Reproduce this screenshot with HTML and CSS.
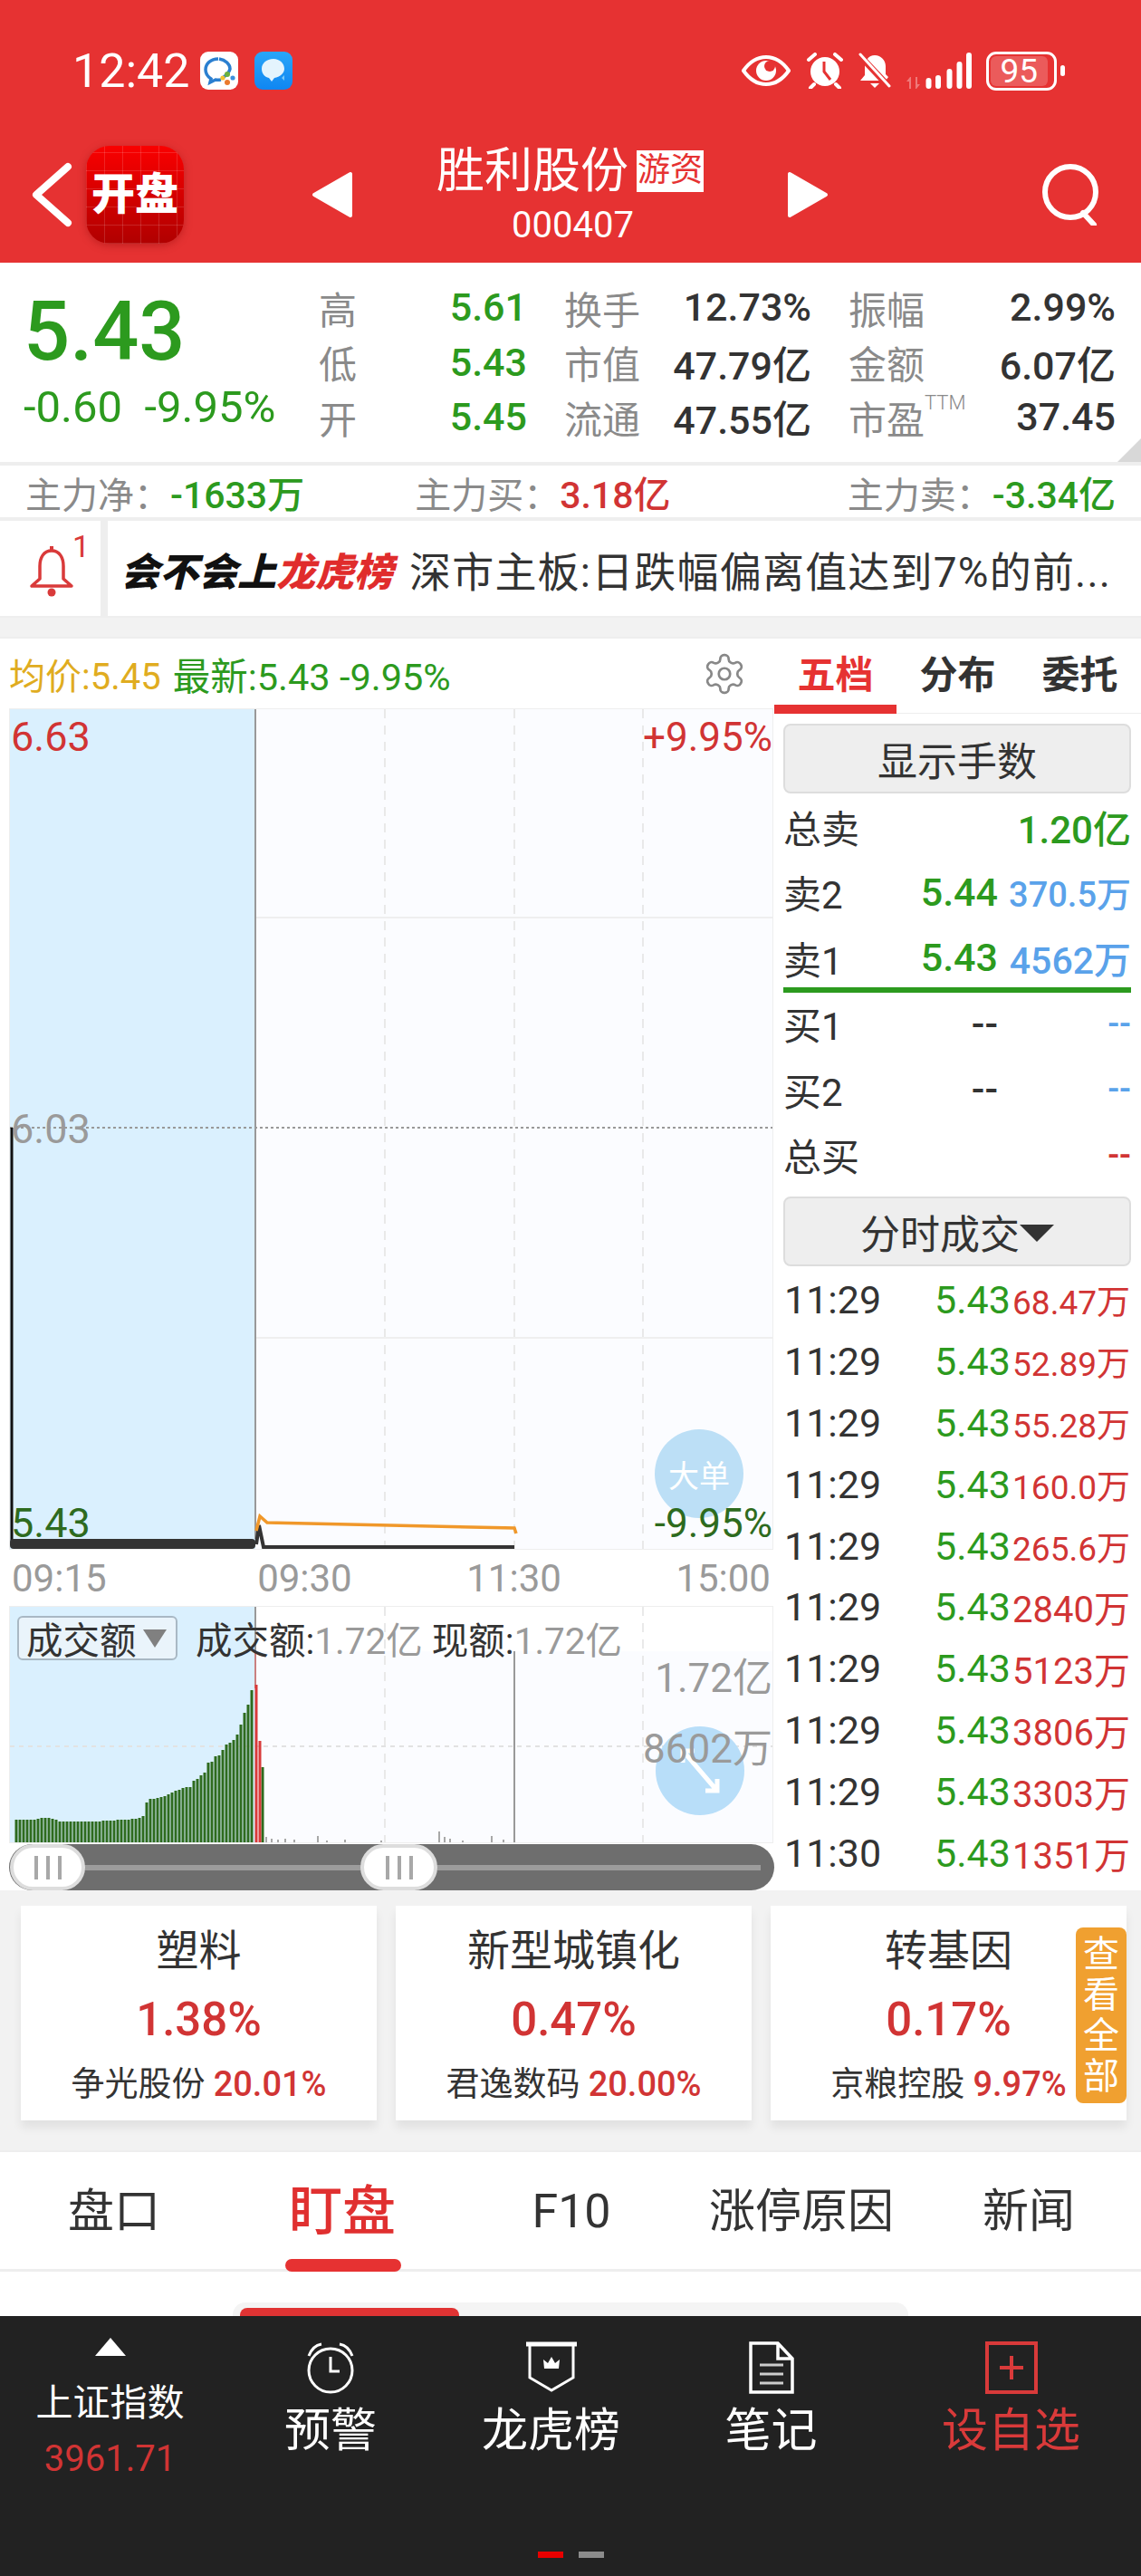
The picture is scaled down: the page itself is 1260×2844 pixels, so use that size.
FILE: index.html
```html
<!DOCTYPE html>
<html lang="zh-CN">
<head>
    <meta charset="UTF-8" />
    <title>胜利股份</title>
    <link rel="stylesheet" href="styles.css">
</head>
<body>

    <!-- 顶部红色栏 -->
    <header class="hdr">
        <div class="status">
            <span class="clock">12:42</span>
            <svg class="app-mini" viewBox="0 0 42 42">
                <rect width="42" height="42" rx="9" fill="#fff"/>
                <path d="M20 8c-8 0-14 5-14 12 0 5 3 8 6 10l-1 4 6-3c2 .4 4 .3 6 0" fill="none" stroke="#2b7fd0" stroke-width="3.500"/>
                <path d="M26 28c3-2 6-5 7-9 0-5-5-10-12-11" fill="none" stroke="#2b7fd0" stroke-width="3.500"/>
                <circle cx="30" cy="25" r="3" fill="#6bb13c"/><circle cx="36" cy="29" r="2.600" fill="#3d8fdc"/><circle cx="30" cy="34" r="3" fill="#ea7a2c"/><circle cx="25" cy="29" r="2.600" fill="#f2c230"/>
            </svg>
            <svg class="app-mini app-gap" viewBox="0 0 42 42">
                <defs><linearGradient id="msgBg" x1="0" y1="0" x2="0" y2="1"><stop offset="0" stop-color="#2aa6f8"/><stop offset="1" stop-color="#0f86f2"/></linearGradient></defs>
                <rect width="42" height="42" rx="9" fill="url(#msgBg)"/>
                <path d="M21 8c-8 0-13 5-13 11 0 5 3 9 8 10l3 4 3-4c6-1 11-5 11-10 0-6-5-11-12-11z" fill="#e4f4fd"/>
                <path d="M30 29l3 3 0-6z" fill="#7ccbf8"/>
            </svg>
            <div class="sys">
                <svg class="ic-eye" viewBox="0 0 54 36">
                    <path d="M2 18C9 8 17 3 27 3s18 5 25 15c-7 10-15 15-25 15S9 28 2 18z" fill="none" stroke="#fff" stroke-width="4"/>
                    <circle cx="27" cy="18" r="11" fill="#fff"/><circle cx="31" cy="13" r="6" fill="#e63232"/>
                </svg>
                <svg class="ic-alarm" viewBox="0 0 42 40">
                    <circle cx="21" cy="21" r="16" fill="#fff"/>
                    <path d="M3 8l7-6M39 8l-7-6M9 35l-4 4M33 35l4 4" stroke="#fff" stroke-width="4" stroke-linecap="round"/>
                    <path d="M20 10v11l7 9" fill="none" stroke="#e63232" stroke-width="3"/>
                </svg>
                <svg class="ic-bell" viewBox="0 0 36 40">
                    <path d="M18 3c-7 0-11 6-11 13v9l-5 6h28l3-4-3-3v-9c0-6-5-12-12-12z" fill="#fff"/>
                    <path d="M13 34h10l-5 5z" fill="#fff"/>
                    <path d="M1 3l32 34" stroke="#e63232" stroke-width="7"/>
                    <path d="M2 2l32 35" stroke="#fff" stroke-width="3" stroke-linecap="round"/>
                </svg>
                <svg class="ic-signal" viewBox="0 0 73 40">
                    <path d="M5 27l-4 5h3v8h2V27zM12 40l4-5h-3v-8h-2v13z" fill="#fff" opacity=".35"/>
                    <path d="M25.500 31v6M36 28v9M48.500 21v16M59.500 13v24M70 3v34" stroke="#fff" stroke-width="6" stroke-linecap="round"/>
                </svg>
                <div class="batt"><span class="batt-fill">95</span></div>
                <div class="batt-nub"></div>
            </div>
        </div>
        <nav class="nav">
            <svg class="back" viewBox="0 0 45 72"><path d="M40 5L5 36l35 31" fill="none" stroke="#fff" stroke-width="8" stroke-linecap="round" stroke-linejoin="round"/></svg>
            <div class="logo"><span>开盘</span></div>
            <svg class="arr arr-l" viewBox="0 0 48 54"><path d="M44 4v46L4 27z" fill="#fff" stroke="#fff" stroke-width="4" stroke-linejoin="round"/></svg>
            <div class="stock">
                <div class="stock-name">胜利股份<span class="stock-tag">游资</span></div>
                <div class="stock-code">000407</div>
            </div>
            <svg class="arr" viewBox="0 0 48 54"><path d="M4 4v46l40-23z" fill="#fff" stroke="#fff" stroke-width="4" stroke-linejoin="round"/></svg>
            <svg class="search" viewBox="0 0 64 68"><circle cx="32" cy="31" r="28" fill="none" stroke="#fff" stroke-width="6"/><path d="M46 54l12 13" stroke="#fff" stroke-width="6" stroke-linecap="round"/></svg>
        </nav>
    </header>

    <!-- 报价 -->
    <section class="quote">
        <div class="quote-left">
            <div class="price">5.43</div>
            <div class="change">-0.60&nbsp; -9.95%</div>
        </div>
        <div class="qt">
            <div class="qc"><span class="ql">高</span><span class="qv green">5.61</span></div>
            <div class="qc"><span class="ql">换手</span><span class="qv">12.73%</span></div>
            <div class="qc"><span class="ql">振幅</span><span class="qv">2.99%</span></div>
            <div class="qc"><span class="ql">低</span><span class="qv green">5.43</span></div>
            <div class="qc"><span class="ql">市值</span><span class="qv">47.79亿</span></div>
            <div class="qc"><span class="ql">金额</span><span class="qv">6.07亿</span></div>
            <div class="qc"><span class="ql">开</span><span class="qv green">5.45</span></div>
            <div class="qc"><span class="ql">流通</span><span class="qv">47.55亿</span></div>
            <div class="qc"><span class="ql">市盈<sup class="ttm">TTM</sup></span><span class="qv">37.45</span></div>
        </div>
        <div class="corner"></div>
    </section>

    <div class="flow">
        <span class="fl">主力净：<b class="green">-1633万</b></span>
        <span class="fl fl-mid">主力买：<b class="red">3.18亿</b></span>
        <span class="fl fl-end">主力卖：<b class="green">-3.34亿</b></span>
    </div>

    <div class="notice">
        <div class="notice-bell">
            <svg class="bell-red" viewBox="0 0 54 58">
                <path d="M27 7c-9 0-13 8-13 17v14l-9 8h44l-9-8V24c0-9-4-17-13-17z" fill="none" stroke="#d93a3a" stroke-width="3.500" stroke-linejoin="round"/>
                <path d="M27 2v6" stroke="#d93a3a" stroke-width="4"/><circle cx="27" cy="53" r="4.500" fill="#d93a3a"/>
            </svg>
            <span class="bell-num">1</span>
        </div>
        <div class="notice-brand">会不会上<em>龙虎榜</em></div>
        <div class="notice-text">深市主板:日跌幅偏离值达到7%的前...</div>
    </div>

    <!-- 分时 + 五档 -->
    <main class="main">
        <div class="left">
            <div class="legend">
                <span class="yellow">均价:5.45</span>
                <span class="green">最新:5.43 -9.95%</span>
                <svg class="gear" viewBox="0 0 24 24" fill="none" stroke="#888" stroke-width="1.300"><path d="M12.220 2h-.44a2 2 0 0 0-2 2v.18a2 2 0 0 1-1 1.730l-.43.25a2 2 0 0 1-2 0l-.15-.08a2 2 0 0 0-2.730.73l-.22.38a2 2 0 0 0 .73 2.730l.15.1a2 2 0 0 1 1 1.720v.51a2 2 0 0 1-1 1.740l-.15.09a2 2 0 0 0-.73 2.730l.22.38a2 2 0 0 0 2.730.73l.15-.08a2 2 0 0 1 2 0l.43.25a2 2 0 0 1 1 1.730V20a2 2 0 0 0 2 2h.44a2 2 0 0 0 2-2v-.18a2 2 0 0 1 1-1.730l.43-.25a2 2 0 0 1 2 0l.15.08a2 2 0 0 0 2.730-.73l.22-.39a2 2 0 0 0-.73-2.730l-.15-.08a2 2 0 0 1-1-1.740v-.5a2 2 0 0 1 1-1.740l.15-.09a2 2 0 0 0 .73-2.730l-.22-.38a2 2 0 0 0-2.730-.73l-.15.08a2 2 0 0 1-2 0l-.43-.25a2 2 0 0 1-1-1.730V4a2 2 0 0 0-2-2z"/><circle cx="12" cy="12" r="3"/></svg>
            </div>

            <div class="chart">
                <svg class="layer" viewBox="0 0 842 927">
                    <path d="M414 0V927M557 0V927M699 0V927" stroke="#e9e9e9" stroke-width="2" stroke-dasharray="10 8"/>
                    <path d="M271 230H842M271 694H842" stroke="#efefef" stroke-width="2"/>
                    <path d="M0 462H842" stroke="#999" stroke-width="2" stroke-dasharray="3 3"/>
                    <path d="M271 0V916" stroke="#999" stroke-width="2"/>
                    <path d="M2 462V920" stroke="#111" stroke-width="3"/>
                    <rect x="0" y="916" width="271" height="11" rx="4" fill="#333"/>
                    <path d="M272 922L275 901L280 925H557" fill="none" stroke="#333" stroke-width="4"/>
                    <path d="M272 907L276 891L284 898L557 904L559 910" fill="none" stroke="#f0982a" stroke-width="3.500"/>
                </svg>
                <div class="float-btn float-big">大单</div>
                <span class="lab lab-l lab-top red">6.63</span>
                <span class="lab lab-l lab-mid gray">6.03</span>
                <span class="lab lab-l lab-low dkgreen">5.43</span>
                <span class="lab lab-r lab-top red">+9.95%</span>
                <span class="lab lab-r lab-low dkgreen">-9.95%</span>
            </div>

            <div class="axis">
                <span class="axis-first">09:15</span><span>09:30</span><span>11:30</span><span>15:00</span>
            </div>

            <div class="vol">
                <svg class="layer" viewBox="0 0 842 260">
                    <path d="M414 0V260M699 0V260" stroke="#e9e9e9" stroke-width="2" stroke-dasharray="10 8"/>
                    <path d="M0 154H842" stroke="#e2e2e2" stroke-width="2" stroke-dasharray="5 5"/>
                    <path d="M271 0V49" stroke="#999" stroke-width="2"/>
                    <path d="M271 49V90" stroke="#c98080" stroke-width="2"/>
                    <path d="M557 49V260" stroke="#999" stroke-width="2"/>
                    <path fill="none" stroke="#2e6b1e" stroke-width="3" d="M7 260V235M11 260V235M15 260V235M19 260V235M23 260V235M27 260V235M31 260V234M35 260V233M39 260V233M43 260V233M47 260V234M51 260V235M55 260V237M59 260V237M63 260V237M67 260V237M71 260V237M75 260V237M79 260V237M83 260V237M87 260V237M91 260V237M95 260V237M99 260V237M103 260V236M107 260V236M111 260V236M115 260V236M119 260V235M123 260V235M127 260V235M131 260V235M135 260V234M139 260V234M143 260V233M147 260V231M151 260V216M155 260V212M159 260V212M163 260V211M167 260V210M171 260V209M175 260V207M179 260V205M183 260V203M187 260V202M191 260V200M195 260V199M199 260V199M203 260V192M207 260V190M211 260V186M215 260V183M219 260V172M223 260V171M227 260V165M231 260V164M235 260V158M239 260V152M243 260V150M247 260V147M251 260V141M255 260V130M259 260V117M263 260V108M267 260V92M279 260V177"/>
                    <path fill="none" stroke="#d93a3a" stroke-width="3" d="M272 260V86M276 260V148"/>
                    <path fill="none" stroke="#a8a8a8" stroke-width="2" d="M283 260V254M289 260V256M296 260V257M304 260V256M314 260V257M340 260V253M350 260V258M370 260V257M410 260V258M474 260V248M480 260V254M486 260V256M500 260V258M532 260V253M545 260V257"/>
                </svg>
                <div class="vol-head">
                    <div class="vol-pill">成交额<i class="tri"></i></div>
                    <div class="vol-info">成交额:<span class="gray">1.72亿</span> 现额:<span class="gray">1.72亿</span></div>
                </div>
                <div class="float-btn float-expand">
                    <svg class="expand" viewBox="0 0 44 50"><path d="M4 4l36 42M3 16V3h13M41 34v13H28" fill="none" stroke="#fff" stroke-width="5"/></svg>
                </div>
                <span class="lab lab-r lab-v1 gray">1.72亿</span>
                <span class="lab lab-r lab-v2 gray">8602万</span>
            </div>

            <div class="slider">
                <div class="slider-track"></div>
                <div class="knob knob-a"><i></i><i></i><i></i></div>
                <div class="knob knob-b"><i></i><i></i><i></i></div>
            </div>
        </div>

        <aside class="right">
            <div class="rtabs">
                <span class="rtab on">五档</span><span class="rtab">分布</span><span class="rtab">委托</span>
            </div>
            <div class="rbtn">显示手数</div>
            <div class="lv"><span>总卖</span><span></span><span class="green lv-total">1.20亿</span></div>
            <div class="lv"><span>卖2</span><span class="green lv-p">5.44</span><span class="blue lv-n">370.5万</span></div>
            <div class="lv lv-sep"><span>卖1</span><span class="green lv-p">5.43</span><span class="blue lv-n lv-fit">4562万</span></div>
            <div class="lv"><span>买1</span><span class="lv-p">--</span><span class="blue lv-n">--</span></div>
            <div class="lv"><span>买2</span><span class="lv-p">--</span><span class="blue lv-n">--</span></div>
            <div class="lv"><span>总买</span><span></span><span class="red lv-n">--</span></div>
            <div class="rbtn rbtn-2">分时成交<i class="tri-dark"></i></div>
            <div class="ticks">
                <div class="tick"><span>11:29</span><span class="green t-p">5.43</span><span class="red t-v">68.47万</span></div>
                <div class="tick"><span>11:29</span><span class="green t-p">5.43</span><span class="red t-v">52.89万</span></div>
                <div class="tick"><span>11:29</span><span class="green t-p">5.43</span><span class="red t-v">55.28万</span></div>
                <div class="tick"><span>11:29</span><span class="green t-p">5.43</span><span class="red t-v">160.0万</span></div>
                <div class="tick"><span>11:29</span><span class="green t-p">5.43</span><span class="red t-v">265.6万</span></div>
                <div class="tick"><span>11:29</span><span class="green t-p">5.43</span><span class="red t-v t-fit">2840万</span></div>
                <div class="tick"><span>11:29</span><span class="green t-p">5.43</span><span class="red t-v t-fit">5123万</span></div>
                <div class="tick"><span>11:29</span><span class="green t-p">5.43</span><span class="red t-v t-fit">3806万</span></div>
                <div class="tick"><span>11:29</span><span class="green t-p">5.43</span><span class="red t-v t-fit">3303万</span></div>
                <div class="tick"><span>11:30</span><span class="green t-p">5.43</span><span class="red t-v t-fit">1351万</span></div>
            </div>
        </aside>
    </main>

    <!-- 板块 -->
    <section class="cards">
        <div class="card">
            <div class="card-title">塑料</div>
            <div class="card-pct">1.38%</div>
            <div class="card-sub">争光股份 <b>20.01%</b></div>
        </div>
        <div class="card">
            <div class="card-title">新型城镇化</div>
            <div class="card-pct">0.47%</div>
            <div class="card-sub">君逸数码 <b>20.00%</b></div>
        </div>
        <div class="card">
            <div class="card-title">转基因</div>
            <div class="card-pct">0.17%</div>
            <div class="card-sub">京粮控股 <b>9.97%</b></div>
            <div class="see-all">查看全部</div>
        </div>
    </section>

    <div class="tabs">
        <span class="tab">盘口</span>
        <span class="tab on">盯盘</span>
        <span class="tab">F10</span>
        <span class="tab">涨停原因</span>
        <span class="tab">新闻</span>
    </div>

    <div class="strip"><div class="strip-pill"><div class="strip-fill"></div></div></div>

    <footer class="bar">
        <div class="bar-row">
            <div class="bi bi-index">
                <i class="tri-up"></i>
                <span class="idx-name">上证指数</span>
                <span class="idx-val">3961.71</span>
            </div>
            <div class="bi">
                <svg class="bi-ic" viewBox="0 0 54 58" fill="none" stroke="#fff" stroke-width="3"><circle cx="27" cy="32" r="24"/><path d="M27 17v16h10"/><path d="M3 16C6 8 11 4 17 3M51 16C48 8 43 4 37 3"/></svg>
                <span>预警</span>
            </div>
            <div class="bi">
                <svg class="bi-ic" viewBox="0 0 56 58" fill="none" stroke="#fff" stroke-width="3"><path d="M0 3h56" stroke-width="5"/><path d="M4 3v37l24 14 24-14V3"/><path d="M20 30l-1-10 5 4 4-7 4 7 5-4-1 10z" fill="#fff" stroke="none"/></svg>
                <span>龙虎榜</span>
            </div>
            <div class="bi">
                <svg class="bi-ic" viewBox="0 0 50 58" fill="none" stroke="#fff" stroke-width="3.500"><path d="M2 2h30l16 17v37H2zM32 2v17h16"/><path d="M12 26h26M12 36h26M12 46h26" stroke="#ccc" stroke-width="3"/></svg>
                <span>笔记</span>
            </div>
            <div class="bi bi-add">
                <svg class="bi-ic" viewBox="0 0 58 58" fill="none" stroke="#d93a3a"><path d="M2 2h54v54H2z" stroke-width="4"/><path d="M29 16v26M16 29h26" stroke-width="4"/></svg>
                <span>设自选</span>
            </div>
        </div>
        <div class="dots"><i class="dot dot-on"></i><i class="dot"></i></div>
    </footer>

</body>
</html>
```

FILE: styles.css
```css
* {
    margin: 0;
    padding: 0;
    box-sizing: border-box;
}

html, body {
    width: 1260px;
    height: 2844px;
    overflow: hidden;
}

body {
    background: #f2f2f2;
    color: #333;
    font-family: Roboto, "Noto Sans CJK SC", sans-serif;
}

i, em, b {
    font-style: normal;
    font-weight: inherit;
}

.green { color: #2c9a1e; }
.red { color: #d13434; }
.blue { color: #5aa2ea; }
.gray { color: #9a9a9a; }
.yellow { color: #e0ac20; }
.dkgreen { color: #2e6b1e; }

/* 顶部 */
.hdr {
    height: 290px;
    background: #e63232;
    color: #fff;
}

.status {
    height: 156px;
    display: flex;
    align-items: center;
    padding-left: 80px;
}

.clock {
    font-size: 52px;
    width: 141px;
}

.app-mini {
    width: 42px;
    height: 42px;
}

.app-gap { margin-left: 18px; }

.sys {
    margin-left: auto;
    margin-right: 84px;
    display: flex;
    align-items: center;
}

.ic-eye { width: 54px; height: 36px; }
.ic-alarm { width: 42px; height: 40px; margin-left: 17px; }
.ic-bell { width: 36px; height: 40px; margin-left: 16px; }
.ic-signal { width: 73px; height: 40px; margin-left: 16px; }

.batt {
    width: 78px;
    height: 43px;
    margin-left: 16px;
    border: 3px solid #fff;
    border-radius: 11px;
    padding: 2px;
}

.batt-fill {
    display: block;
    height: 100%;
    width: 92%;
    background: rgba(255, 255, 255, 0.2);
    border-radius: 6px;
    font-size: 37px;
    line-height: 33px;
    text-align: center;
}

.batt-nub {
    width: 5px;
    height: 12px;
    margin-left: 4px;
    background: #fff;
    border-radius: 3px;
}

.nav {
    height: 118px;
    display: flex;
    align-items: center;
    padding-left: 35px;
}

.back { width: 45px; height: 72px; }

.logo {
    width: 108px;
    height: 108px;
    margin-left: 15px;
    border-radius: 26px;
    background:
        repeating-linear-gradient(90deg, rgba(255,255,255,.14) 0 1px, transparent 1px 20px),
        repeating-linear-gradient(0deg, rgba(255,255,255,.14) 0 1px, transparent 1px 20px),
        linear-gradient(#fa0000, #b00000);
    box-shadow: 0 2px 10px rgba(120, 0, 0, 0.35);
    display: flex;
    align-items: center;
    justify-content: center;
}

.logo span {
    font-size: 48px;
    line-height: 60px;
    font-weight: 900;
    white-space: nowrap;
}

.arr { width: 48px; height: 54px; }
.arr-l { margin-left: 140px; }

.stock {
    width: 477px;
    text-align: center;
}

.stock-name {
    display: flex;
    align-items: center;
    justify-content: center;
    font-size: 53px;
    line-height: 58px;
}

.stock-tag {
    margin-left: 9px;
    width: 74px;
    height: 46px;
    background: #fff;
    color: #e63232;
    font-size: 36px;
    line-height: 44px;
    text-align: center;
}

.stock-code {
    font-size: 40px;
    line-height: 42px;
    margin-top: 10px;
    padding-left: 6px;
}

.search {
    width: 64px;
    height: 68px;
    margin-left: 234px;
}

/* 报价 */
.quote {
    position: relative;
    height: 220px;
    background: #fff;
    display: flex;
}

.quote-left {
    width: 352px;
    padding-left: 26px;
}

.price {
    font-size: 90px;
    font-weight: 500;
    line-height: 100px;
    margin-top: 27px;
    color: #2c9a1e;
}

.change {
    font-size: 49px;
    line-height: 50px;
    margin-top: 8px;
    color: #2c9a1e;
    white-space: nowrap;
}

.qt {
    display: grid;
    grid-template-columns: 230px 273px 295px;
    grid-auto-rows: 60.500px;
    column-gap: 41px;
    padding-top: 19px;
}

.qc {
    display: flex;
    justify-content: space-between;
    align-items: center;
    font-size: 43px;
}

.ql {
    color: #8a8a8a;
    position: relative;
    font-size: 42px;
}

.qv {
    font-weight: 500;
    white-space: nowrap;
}

.ttm {
    font-size: 22px;
    font-weight: 300;
    position: absolute;
    top: 2px;
    left: 84px;
}

.corner {
    position: absolute;
    right: 0;
    bottom: 0;
    width: 26px;
    height: 26px;
    background: #d8d8d8;
    clip-path: polygon(100% 0, 100% 100%, 0 100%);
}

/* 主力 */
.flow {
    height: 65px;
    border-top: 4px solid #eee;
    border-bottom: 4px solid #eee;
    background: #fff;
    display: flex;
    align-items: center;
    padding: 0 28px;
    font-size: 40px;
    color: #8a8a8a;
}

.fl { white-space: nowrap; }

.fl b {
    font-size: 41px;
    font-weight: 500;
}

.fl-mid { margin-left: 122px; }
.fl-end { margin-left: auto; }

.notice {
    height: 107px;
    background: #fff;
    display: flex;
    align-items: center;
    border-bottom: 2px solid #eee;
}

.notice-bell {
    position: relative;
    width: 119px;
    height: 105px;
    border-right: 8px solid #eee;
    padding: 26px 0 0 30px;
}

.bell-red {
    display: block;
    width: 54px;
    height: 58px;
}

.bell-num {
    position: absolute;
    left: 80px;
    top: 8px;
    font-size: 34px;
    line-height: 40px;
    color: #d93a3a;
}

.notice-brand {
    margin-left: 14px;
    width: 319px;
    font-size: 43px;
    font-weight: 900;
    font-style: italic;
    color: #111;
    white-space: nowrap;
}

.notice-brand em {
    color: #e02c2c;
    font-style: italic;
}

.notice-text {
    font-size: 46px;
    letter-spacing: 1.200px;
    white-space: nowrap;
}

/* 分时 + 五档 */
.main {
    margin-top: 21px;
    height: 1384px;
    background: #fff;
    display: flex;
    border-top: 2px solid #eee;
}

.left {
    width: 855px;
    flex: none;
}

.legend {
    height: 78px;
    display: flex;
    align-items: center;
    padding-left: 10px;
    font-size: 40px;
    white-space: nowrap;
}

.legend .green {
    margin-left: 13px;
    font-size: 41.500px;
}

.gear {
    width: 50px;
    height: 50px;
    margin-left: auto;
    margin-right: 30px;
}

.chart, .vol {
    position: relative;
    width: 842px;
    margin-left: 11px;
    background: linear-gradient(90deg, #daf0fe 271px, #fbfcff 271px);
    box-shadow: 0 0 0 1px #eee;
}

.chart { height: 927px; }

.vol {
    height: 260px;
    background:
        linear-gradient(90deg, transparent 271px, #fff 271px) top / 100% 49px no-repeat,
        linear-gradient(90deg, #daf0fe 271px, #fbfcff 271px);
}

.layer {
    position: absolute;
    left: 0;
    top: 0;
    width: 100%;
    height: 100%;
}

.lab {
    position: absolute;
    font-size: 45px;
    line-height: 50px;
    white-space: nowrap;
}

.lab-l { left: 1px; }

.lab-r {
    right: 0;
    font-size: 44px;
}

.lab-top { top: 6px; }
.lab-mid { top: 439px; }
.lab-low { top: 874px; }
.lab-v1 { top: 54px; }
.lab-v2 { top: 132px; }

.float-btn {
    position: absolute;
    width: 98px;
    height: 98px;
    border-radius: 50%;
    background: #bcdff6;
    color: #fff;
    display: flex;
    align-items: center;
    justify-content: center;
}

.float-big {
    left: 712px;
    top: 795px;
    font-size: 34px;
}

.float-expand {
    left: 713px;
    top: 132px;
    background: #b8def9;
}

.expand { width: 44px; height: 50px; }

.axis {
    height: 64px;
    display: flex;
    justify-content: space-between;
    align-items: center;
    margin-left: 11px;
    width: 842px;
    padding: 0 2px 0 2px;
    font-size: 42px;
    color: #9a9a9a;
}

.axis-first { margin-right: 40px; }

.vol-head {
    position: absolute;
    left: 8px;
    top: 5px;
    display: flex;
    align-items: center;
    font-size: 40.500px;
    white-space: nowrap;
}

.vol-pill {
    width: 177px;
    height: 49px;
    display: flex;
    align-items: center;
    padding-left: 8px;
    border: 2px solid #a9b8c4;
    border-radius: 6px;
    background: #eaf4fb;
}

.tri {
    margin-left: 7px;
    border-left: 13px solid transparent;
    border-right: 13px solid transparent;
    border-top: 20px solid #808080;
}

.vol-info { margin-left: 20px; }

.slider {
    position: relative;
    margin: 2px 0 0 10px;
    width: 845px;
    height: 51px;
    background: #6e6e6e;
    border-radius: 26px;
}

.slider-track {
    position: absolute;
    left: 50px;
    right: 15px;
    top: 23px;
    height: 6px;
    background: #9c9c9c;
}

.knob {
    position: absolute;
    top: 0;
    height: 51px;
    background: #fff;
    border: 4px solid #ddd;
    border-radius: 26px;
    display: flex;
    align-items: center;
    justify-content: center;
    gap: 9px;
}

.knob i {
    width: 4px;
    height: 26px;
    background: #a8a8a8;
}

.knob-a { left: 1px; width: 83px; }
.knob-b { left: 388px; width: 85px; }

/* 右栏 */
.right {
    width: 405px;
    flex: none;
    height: 1382px;
}

.rtabs {
    height: 83px;
    display: flex;
    border-bottom: 1px solid #eee;
}

.rtab {
    width: 135px;
    text-align: center;
    font-size: 42px;
    font-weight: 700;
    line-height: 82px;
}

.rtab.on {
    color: #e63232;
    border-bottom: 10px solid #e63232;
    height: 83px;
}

.rbtn {
    width: 384px;
    height: 77px;
    margin: 11px 0 0 10px;
    background: #eee;
    border: 2px solid #ddd;
    border-radius: 8px;
    display: flex;
    align-items: center;
    justify-content: center;
    font-size: 44px;
}

.rbtn-2 { margin-top: 10px; }

.tri-dark {
    margin-top: 4px;
    border-left: 19px solid transparent;
    border-right: 19px solid transparent;
    border-top: 19px solid #333;
}

.lv {
    position: relative;
    display: grid;
    grid-template-columns: 1fr auto 147px;
    align-items: center;
    height: 72.500px;
    padding: 0 11px 0 10px;
    font-size: 42px;
}

.lv-p {
    font-size: 43px;
    font-weight: 500;
    text-align: right;
}

.lv-n {
    font-size: 38px;
    font-weight: 500;
    text-align: right;
}

.lv-fit { font-size: 41px; }

.lv-total {
    font-weight: 500;
    text-align: right;
}

.lv-sep::after {
    content: "";
    position: absolute;
    left: 10px;
    right: 11px;
    bottom: -2px;
    height: 6px;
    background: #2c9a1e;
}

.ticks { margin-top: 3px; }

.tick {
    display: grid;
    grid-template-columns: 166px 82px 134px;
    align-items: center;
    height: 67.900px;
    padding-left: 11px;
    font-size: 43px;
}

.t-v {
    font-size: 37px;
    text-align: right;
    white-space: nowrap;
}

.t-fit { font-size: 40px; }

/* 板块 */
.cards {
    height: 287px;
    padding: 17px 17px 0 23px;
    display: grid;
    grid-template-columns: repeat(3, 393px);
    column-gap: 21px;
    align-items: start;
}

.card {
    position: relative;
    height: 237px;
    background: #fff;
    box-shadow: 0 8px 10px rgba(0, 0, 0, 0.07);
    padding-top: 23px;
    text-align: center;
}

.card-title {
    font-size: 47px;
    line-height: 54px;
}

.card-pct {
    margin-top: 19px;
    font-size: 51px;
    line-height: 60px;
    font-weight: 500;
    color: #d13434;
}

.card-sub {
    margin-top: 19px;
    font-size: 37px;
    line-height: 44px;
    white-space: nowrap;
}

.card-sub b {
    font-size: 38px;
    color: #d13434;
    font-weight: 500;
}

.see-all {
    position: absolute;
    right: 0;
    top: 24px;
    width: 56px;
    height: 194px;
    padding: 0 8px;
    background: #f0a030;
    border-radius: 8px;
    color: #fff;
    font-size: 40px;
    line-height: 45px;
    display: flex;
    align-items: center;
    text-align: center;
}

.tabs {
    position: relative;
    height: 134px;
    background: #fff;
    border-top: 2px solid #eee;
    border-bottom: 3px solid #eee;
    display: grid;
    grid-template-columns: 252px 252px 254px 254px 1fr;
}

.tab {
    position: relative;
    text-align: center;
    font-size: 51px;
    line-height: 132px;
}

.tab:nth-child(3) { font-size: 52px; }

.tab.on {
    color: #e03030;
    font-size: 59px;
    font-weight: 500;
}

.tab.on::after {
    content: "";
    position: absolute;
    left: 63px;
    bottom: 0;
    width: 128px;
    height: 14px;
    background: #e63232;
    border-radius: 8px;
}

.strip {
    height: 49px;
    padding-top: 34px;
    background: #fff;
}

.strip-pill {
    margin-left: 257px;
    width: 746px;
    height: 15px;
    padding: 6px 0 0 8px;
    background: #f4f4f4;
    border-radius: 14px 14px 0 0;
}

.strip-fill {
    width: 242px;
    height: 9px;
    background: #e03333;
    border-radius: 8px 8px 0 0;
}

/* 底部 */
.bar {
    height: 287px;
    background: #222;
    color: #fff;
    display: flex;
    flex-direction: column;
}

.bar-row {
    display: grid;
    grid-template-columns: 243px 244px 243px 243px 1fr;
}

.bi {
    display: flex;
    flex-direction: column;
    align-items: center;
    padding-top: 28px;
    font-size: 51px;
    line-height: 62px;
}

.bi-ic {
    width: 58px;
    height: 58px;
    margin-bottom: 10px;
}

.bi-add { color: #d93a3a; }

.bi-index {
    padding-top: 24px;
    font-size: 40px;
}

.tri-up {
    border-left: 17px solid transparent;
    border-right: 17px solid transparent;
    border-bottom: 20px solid #fff;
}

.idx-name {
    line-height: 60px;
    margin-top: 22px;
    font-size: 41px;
}

.idx-val {
    font-size: 40px;
    line-height: 50px;
    margin-top: 7px;
    color: #d13434;
}

.dots {
    margin-top: auto;
    padding-bottom: 20px;
    display: flex;
    justify-content: center;
    gap: 17px;
}

.dot {
    width: 28px;
    height: 7px;
    background: #8c8c8c;
}

.dot-on { background: #e80000; }
```
